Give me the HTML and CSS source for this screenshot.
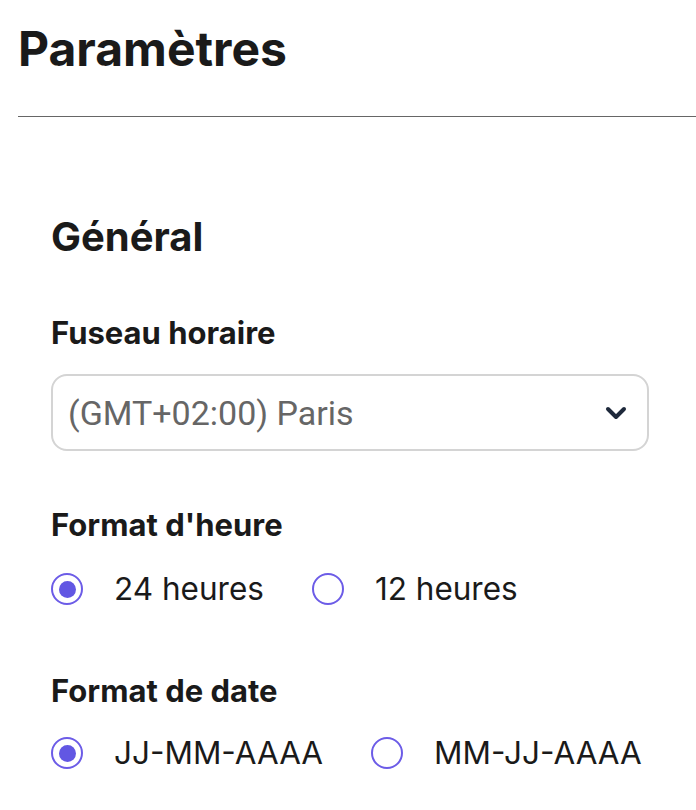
FILE: index.html
```html
<!DOCTYPE html>
<html lang="fr">
<head>
<meta charset="utf-8">
<title>Paramètres</title>
<link rel="stylesheet" href="styles.css">
</head>
<body>
<header class="page-header">
  <h1 class="page-title">Paramètres</h1>
</header>
<main class="settings">
  <h2 class="section-title">Général</h2>
  <div class="field field-timezone">
    <div class="field-label">Fuseau horaire</div>
    <div class="select">
      <span class="select-value">(GMT+02:00) Paris</span>
      <svg class="chevron" width="22" height="14" viewBox="0 0 22 14"><polyline points="3,3 11,11 19,3" fill="none" stroke="#1e293b" stroke-width="4" stroke-linecap="round" stroke-linejoin="round"/></svg>
    </div>
  </div>
  <div class="field field-time">
    <div class="field-label">Format d'heure</div>
    <div class="radio-group">
      <label class="option"><span class="radio checked"></span><span class="option-text">24 heures</span></label>
      <label class="option"><span class="radio"></span><span class="option-text">12 heures</span></label>
    </div>
  </div>
  <div class="field field-date">
    <div class="field-label">Format de date</div>
    <div class="radio-group">
      <label class="option"><span class="radio checked"></span><span class="option-text">JJ-MM-AAAA</span></label>
      <label class="option"><span class="radio"></span><span class="option-text">MM-JJ-AAAA</span></label>
    </div>
  </div>
</main>
</body>
</html>
```
FILE: styles.css
```css
html, body {
  margin: 0;
  padding: 0;
  background: #ffffff;
}
body {
  font-family: Inter, "Noto Sans", sans-serif;
  color: #1a1a1a;
  overflow: hidden;
}
.page-header {
  margin-left: 18px;
  padding-top: 20px;
  padding-bottom: 38px;
  border-bottom: 1px solid #666666;
}
.page-title {
  margin: 0;
  font-size: 48px;
  line-height: 58px;
  font-weight: 700;
  color: #1a1a1a;
}
.settings {
  padding: 96px 47px 0 51px;
}
.section-title {
  margin: 0;
  font-size: 40px;
  line-height: 48px;
  font-weight: 700;
  color: #1a1a1a;
}
.field-label {
  font-size: 31px;
  line-height: 38px;
  font-weight: 700;
  color: #1a1a1a;
  white-space: nowrap;
}
.field-timezone { margin-top: 53px; }
.field-time { margin-top: 55px; }
.field-date { margin-top: 63px; }
.select {
  margin-top: 22px;
  height: 73px;
  border: 2px solid #d4d4d4;
  border-radius: 16px;
  display: flex;
  align-items: center;
  justify-content: space-between;
  padding: 0 20px 0 15px;
}
.select-value {
  font-family: Roboto, "Liberation Sans", sans-serif;
  font-size: 34px;
  color: #666666;
  white-space: nowrap;
}
.chevron { display: block; flex-shrink: 0; }
.radio-group {
  margin-top: 25px;
  display: flex;
  gap: 48px;
  height: 40px;
  align-items: center;
  white-space: nowrap;
}
.field-date .radio-group { margin-top: 23px; }
.option {
  display: flex;
  align-items: center;
  gap: 31px;
  flex-shrink: 0;
}
.radio {
  box-sizing: border-box;
  flex-shrink: 0;
  width: 32px;
  height: 32px;
  border: 2px solid #6c5ce7;
  border-radius: 50%;
  display: flex;
  align-items: center;
  justify-content: center;
}
.radio.checked::after {
  content: "";
  width: 17px;
  height: 17px;
  border-radius: 50%;
  background: #6257e3;
}
.option-text {
  font-size: 31.5px;
  line-height: 40px;
  color: #1a1a1a;
  white-space: nowrap;
}
```
